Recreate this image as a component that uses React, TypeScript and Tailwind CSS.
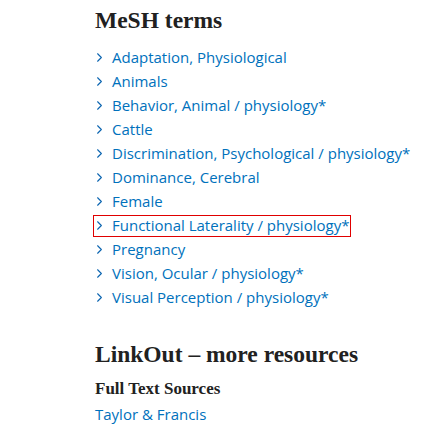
import React from "react";
import { ChevronRight } from "lucide-react";

const terms = [
  "Adaptation, Physiological",
  "Animals",
  "Behavior, Animal / physiology*",
  "Cattle",
  "Discrimination, Psychological / physiology*",
  "Dominance, Cerebral",
  "Female",
  "Functional Laterality / physiology*",
  "Pregnancy",
  "Vision, Ocular / physiology*",
  "Visual Perception / physiology*",
];

const serif = { fontFamily: '"Liberation Serif", serif' };

export default function App() {
  return (
    <div className="w-[448px] h-[448px] bg-white pl-[95px] pt-[5px]" style={{ fontFamily: '"Open Sans", sans-serif' }}>
      <div className="text-[23.5px] font-bold text-[#212121] leading-[30px]" style={serif}>
        MeSH terms
      </div>
      <div className="mt-[11px] flex flex-col">
        {terms.map((t, i) => (
          <div key={t} className="h-[24px] flex items-center">
            <div
              className={
                i === 7
                  ? "flex items-center h-[22px] pr-[1px] border border-[#e00000] -ml-[2px] pl-[1px]"
                  : "flex items-center h-[22px] pr-[1px]"
              }
            >
              <ChevronRight size={15} strokeWidth={1.7} color="#0a64b0" className="-ml-[3px] mr-[5px] shrink-0 relative -top-[1px]" />
              <span className="text-[15px] leading-[20px] text-[#0071bc] relative -top-[1px]">{t}</span>
            </div>
          </div>
        ))}
      </div>
      <div className="mt-[29px] text-[23.5px] font-bold text-[#212121] leading-[30px]" style={serif}>
        LinkOut – more resources
      </div>
      <div className="mt-[9px] text-[17px] font-bold text-[#212121] leading-[22px]" style={serif}>
        Full Text Sources
      </div>
      <div className="mt-[4px] text-[15px] leading-[20px] text-[#0071bc]">Taylor &amp; Francis</div>
    </div>
  );
}
